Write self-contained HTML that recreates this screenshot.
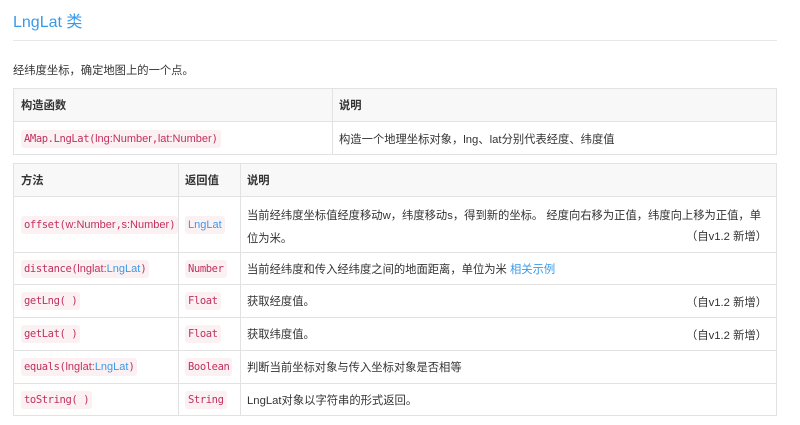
<!DOCTYPE html>
<html><head><meta charset="utf-8"><style>
*{margin:0;padding:0;box-sizing:border-box}
body{width:800px;height:425px;background:#fff;font-family:"Liberation Sans","Noto Sans CJK SC",sans-serif;color:#333;font-size:11.3px;position:relative;overflow:hidden}
.a{position:absolute}
h1{position:absolute;left:13px;top:8px;font-size:16px;font-weight:normal;color:#3a9ae8}
.hr{position:absolute;left:13px;top:40px;width:764px;height:1px;background:#e8e8e8}
.p{left:13px;top:62px;color:#333}
.box{position:absolute;border:1px solid #e2e2e2}
.row{position:absolute;left:0;right:0;border-top:1px solid #e2e2e2}
.hd{background:#f8f8f8;border-top:none;font-weight:bold}
.cell{position:absolute;top:0;bottom:0;display:flex;align-items:center;padding-left:7px}
.vl{position:absolute;top:0;bottom:0;width:1px;background:#e2e2e2}
code{font-family:"DejaVu Sans Mono","Liberation Mono",monospace;font-size:10.5px;color:#c03060;background:#fbf1f3;padding:3px 3px;border-radius:3px;letter-spacing:-0.4px}
code i{font-style:normal;font-family:"Liberation Sans",sans-serif;font-size:11px;letter-spacing:0}
.bl{color:#3a9ae8}
.r{position:absolute;right:9px}
</style></head><body>
<h1>LngLat 类</h1>
<div class="hr"></div>
<div class="a p">经纬度坐标，确定地图上的一个点。</div>

<div class="box" style="left:13px;top:88px;width:764px;height:67px">
 <div class="row hd" style="top:0;height:32px"><div class="cell" style="left:0">构造函数</div><div class="cell" style="left:318px">说明</div></div>
 <div class="row" style="top:32px;height:34px"><div class="cell" style="left:0"><code>AMap.LngLat(<i>lng:Number</i>,<i>lat:Number</i>)</code></div><div class="cell" style="left:318px">构造一个地理坐标对象，lng、lat分别代表经度、纬度值</div></div>
 <div class="vl" style="left:318px"></div>
</div>

<div class="box" style="left:13px;top:163px;width:764px;height:253px">
 <div class="row hd" style="top:0;height:32px"><div class="cell" style="left:0">方法</div><div class="cell" style="left:164px">返回值</div><div class="cell" style="left:226px">说明</div></div>
 <div class="row" style="top:32px;height:56px"><div class="cell" style="left:0"><code>offset(<i>w:Number</i>,<i>s:Number</i>)</code></div><div class="cell" style="left:164px"><code class="bl"><i>LngLat</i></code></div>
  <div class="a" style="left:233px;top:8px;line-height:23px;width:525px">当前经纬度坐标值经度移动w，纬度移动s，得到新的坐标。 经度向右移为正值，纬度向上移为正值，单<br>位为米。</div><div class="r" style="top:31px">（自v1.2 新增）</div></div>
 <div class="row" style="top:88px;height:32px"><div class="cell" style="left:0"><code>distance(<i>lnglat:<span class="bl">LngLat</span></i>)</code></div><div class="cell" style="left:164px"><code>Number</code></div><div class="cell" style="left:226px">当前经纬度和传入经纬度之间的地面距离，单位为米&nbsp;<span class="bl">相关示例</span></div></div>
 <div class="row" style="top:120px;height:33px"><div class="cell" style="left:0"><code>getLng( )</code></div><div class="cell" style="left:164px"><code>Float</code></div><div class="cell" style="left:226px">获取经度值。</div><div class="r" style="top:9px">（自v1.2 新增）</div></div>
 <div class="row" style="top:153px;height:33px"><div class="cell" style="left:0"><code>getLat( )</code></div><div class="cell" style="left:164px"><code>Float</code></div><div class="cell" style="left:226px">获取纬度值。</div><div class="r" style="top:9px">（自v1.2 新增）</div></div>
 <div class="row" style="top:186px;height:33px"><div class="cell" style="left:0"><code>equals(<i>lnglat:<span class="bl">LngLat</span></i>)</code></div><div class="cell" style="left:164px"><code>Boolean</code></div><div class="cell" style="left:226px">判断当前坐标对象与传入坐标对象是否相等</div></div>
 <div class="row" style="top:219px;height:33px"><div class="cell" style="left:0"><code>toString( )</code></div><div class="cell" style="left:164px"><code>String</code></div><div class="cell" style="left:226px">LngLat对象以字符串的形式返回。</div></div>
 <div class="vl" style="left:164px"></div><div class="vl" style="left:226px"></div>
</div>
</body></html>
